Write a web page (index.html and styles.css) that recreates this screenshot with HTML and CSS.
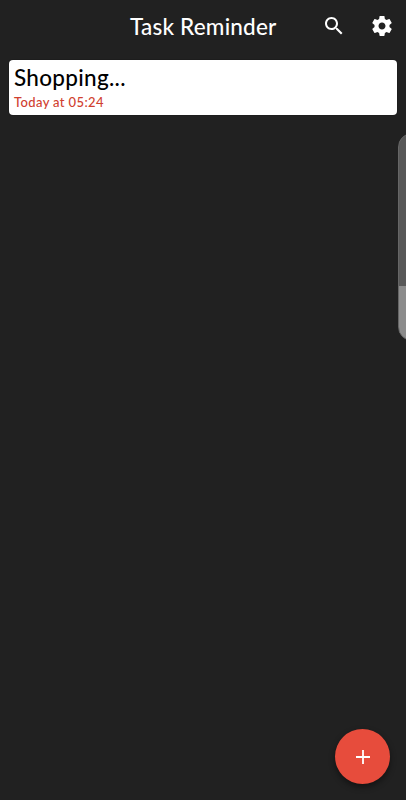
FILE: index.html
```html
<!DOCTYPE html>
<html lang="en">
<head>
  <meta charset="utf-8">
  <meta name="viewport" content="width=device-width, initial-scale=1">
  <title>Task Reminder</title>
  <link rel="stylesheet" href="styles.css">
</head>
<body>
  <header class="toolbar">
    <h1 class="title">Task Reminder</h1>
    <button class="icon-btn" type="button" aria-label="Search">
      <svg viewBox="0 0 24 24"><path d="M15.5 14h-.79l-.28-.27C15.41 12.59 16 11.11 16 9.5 16 5.91 13.09 3 9.5 3S3 5.91 3 9.5 5.91 16 9.5 16c1.61 0 3.09-.59 4.23-1.57l.27.28v.79l5 4.99L20.49 19l-4.99-5zm-6 0C7.01 14 5 11.99 5 9.5S7.01 5 9.5 5 14 7.01 14 9.5 11.99 14 9.5 14z"/></svg>
    </button>
    <button class="icon-btn" type="button" aria-label="Settings">
      <svg viewBox="0 0 24 24"><path d="M19.43 12.98c.04-.32.07-.64.07-.98s-.03-.66-.07-.98l2.11-1.65c.19-.15.24-.42.12-.64l-2-3.46c-.12-.22-.39-.3-.61-.22l-2.49 1c-.52-.4-1.08-.73-1.69-.98l-.38-2.65C14.46 2.18 14.25 2 14 2h-4c-.25 0-.46.18-.49.42l-.38 2.65c-.61.25-1.17.59-1.69.98l-2.49-1c-.23-.09-.49 0-.61.22l-2 3.46c-.13.22-.07.49.12.64l2.11 1.65c-.04.32-.07.65-.07.98s.03.66.07.98l-2.11 1.65c-.19.15-.24.42-.12.64l2 3.46c.12.22.39.3.61.22l2.49-1c.52.4 1.08.73 1.69.98l.38 2.65c.03.24.24.42.49.42h4c.25 0 .46-.18.49-.42l.38-2.65c.61-.25 1.17-.59 1.69-.98l2.49 1c.23.09.49 0 .61-.22l2-3.46c.12-.22.07-.49-.12-.64l-2.11-1.65zM12 15.5c-1.93 0-3.5-1.57-3.5-3.5s1.57-3.5 3.5-3.5 3.5 1.57 3.5 3.5-1.57 3.5-3.5 3.5z"/></svg>
    </button>
  </header>

  <main class="tasks">
    <div class="task">
      <h2 class="task-name">Shopping...</h2>
      <p class="task-time">Today at 05:24</p>
    </div>
  </main>

  <div class="edge-panel"></div>

  <button class="fab" type="button" aria-label="Add task">
    <svg viewBox="0 0 24 24"><path d="M19 12.9h-6.1V19h-1.8v-6.1H5v-1.8h6.1V5h1.8v6.1H19v1.8z"/></svg>
  </button>
</body>
</html>
```

FILE: styles.css
```css
* {
  box-sizing: border-box;
}

body {
  margin: 0;
  height: 100vh;
  overflow: hidden;
  background-color: #212121;
  font-family: Lato, "Liberation Sans", sans-serif;
}

button {
  padding: 0;
  border: none;
  background: none;
}

svg {
  display: block;
  width: 24px;
  height: 24px;
  fill: #fff;
}

/* top bar */
.toolbar {
  display: grid;
  grid-template-columns: 1fr 48px 48px;
  align-items: center;
  height: 52px;
}

.title {
  margin: 0;
  padding: 1px 0 0 130px;
  color: #fff;
  font-size: 22.5px;
  font-weight: 500;
  line-height: 28px;
  letter-spacing: 0.2px;
  white-space: nowrap;
}

.icon-btn {
  display: flex;
  justify-content: center;
}

/* task list */
.tasks {
  padding: 8px 9px;
}

.task {
  height: 55px;
  padding: 4px 5px;
  border-radius: 4px;
  background-color: #fff;
  box-shadow: 0 0 1px #000;
}

.task-name {
  margin: 0;
  color: #000;
  font-size: 22.5px;
  font-weight: 500;
  line-height: 28px;
  letter-spacing: 0.3px;
}

.task-time {
  margin: 0;
  color: #d0402f;
  font-size: 13px;
  font-weight: 500;
  line-height: 21px;
  letter-spacing: 0.37px;
}

/* handle on the right edge, most of it is off the screen */
.edge-panel {
  position: absolute;
  top: 133px;
  right: -20px;
  width: 28px;
  height: 208px;
  border: 1px solid #666;
  border-radius: 14px;
  background: linear-gradient(#585858 152px, #8c8c8c 152px);
}

.fab {
  position: absolute;
  right: 16px;
  bottom: 16px;
  display: flex;
  justify-content: center;
  align-items: center;
  width: 55px;
  height: 55px;
  border-radius: 50%;
  background-color: #e74c3c;
  box-shadow: 0 3px 6px rgba(0, 0, 0, 0.45);
}
```
